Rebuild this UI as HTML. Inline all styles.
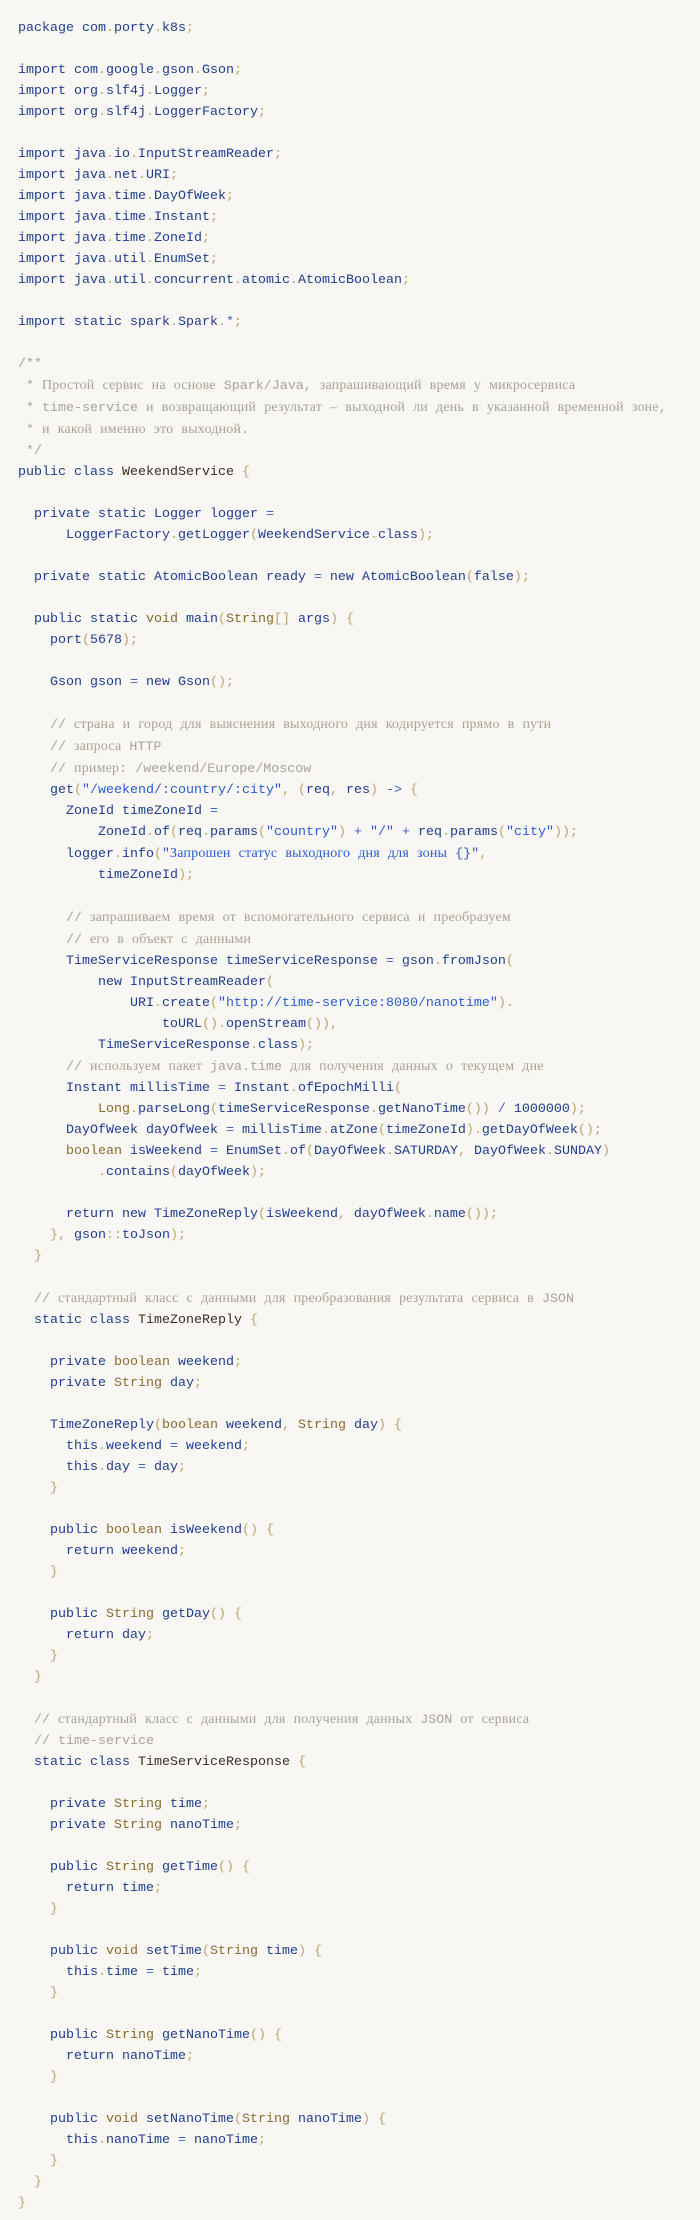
<!DOCTYPE html>
<html><head><meta charset="utf-8"><style>
html,body{margin:0;padding:0;background:#f8f7f4;}
body{width:700px;height:2220px;overflow:hidden;}
pre{margin:0;padding:18px 0 0 18px;font-family:"Liberation Mono",monospace;font-size:13.33px;line-height:21px;color:#1f3d8e;}
.p{color:#bfa26a}.t{color:#8a6a2c}.n{color:#3a2c1e}.s{color:#2b5bd4}.c{color:#aaa393}.o{color:#3e62c4}
.r{font-family:"Liberation Serif",serif;font-size:14px;letter-spacing:0.2px}
</style></head><body><pre>package com<span class="p">.</span>porty<span class="p">.</span>k8s<span class="p">;</span>

import com<span class="p">.</span>google<span class="p">.</span>gson<span class="p">.</span>Gson<span class="p">;</span>
import org<span class="p">.</span>slf4j<span class="p">.</span>Logger<span class="p">;</span>
import org<span class="p">.</span>slf4j<span class="p">.</span>LoggerFactory<span class="p">;</span>

import java<span class="p">.</span>io<span class="p">.</span>InputStreamReader<span class="p">;</span>
import java<span class="p">.</span>net<span class="p">.</span>URI<span class="p">;</span>
import java<span class="p">.</span>time<span class="p">.</span>DayOfWeek<span class="p">;</span>
import java<span class="p">.</span>time<span class="p">.</span>Instant<span class="p">;</span>
import java<span class="p">.</span>time<span class="p">.</span>ZoneId<span class="p">;</span>
import java<span class="p">.</span>util<span class="p">.</span>EnumSet<span class="p">;</span>
import java<span class="p">.</span>util<span class="p">.</span>concurrent<span class="p">.</span>atomic<span class="p">.</span>AtomicBoolean<span class="p">;</span>

import static spark<span class="p">.</span>Spark<span class="p">.</span><span class="o">*</span><span class="p">;</span>

<span class="c">/**
 * <span class="r">Простой</span> <span class="r">сервис</span> <span class="r">на</span> <span class="r">основе</span> Spark/Java, <span class="r">запрашивающий</span> <span class="r">время</span> <span class="r">у</span> <span class="r">микросервиса</span>
 * time-service <span class="r">и</span> <span class="r">возвращающий</span> <span class="r">результат</span> <span class="r">–</span> <span class="r">выходной</span> <span class="r">ли</span> <span class="r">день</span> <span class="r">в</span> <span class="r">указанной</span> <span class="r">временной</span> <span class="r">зоне</span>,
 * <span class="r">и</span> <span class="r">какой</span> <span class="r">именно</span> <span class="r">это</span> <span class="r">выходной</span>.
 */</span>
public class <span class="n">WeekendService</span> <span class="p">{</span>

  private static Logger logger <span class="o">=</span>
      LoggerFactory<span class="p">.</span>getLogger<span class="p">(</span>WeekendService<span class="p">.</span>class<span class="p">);</span>

  private static AtomicBoolean ready <span class="o">=</span> new AtomicBoolean<span class="p">(</span>false<span class="p">);</span>

  public static <span class="t">void</span> main<span class="p">(</span><span class="t">String</span><span class="p">[]</span> args<span class="p">)</span> <span class="p">{</span>
    port<span class="p">(</span>5678<span class="p">);</span>

    Gson gson <span class="o">=</span> new Gson<span class="p">();</span>

    <span class="c">// <span class="r">страна</span> <span class="r">и</span> <span class="r">город</span> <span class="r">для</span> <span class="r">выяснения</span> <span class="r">выходного</span> <span class="r">дня</span> <span class="r">кодируется</span> <span class="r">прямо</span> <span class="r">в</span> <span class="r">пути</span></span>
    <span class="c">// <span class="r">запроса</span> HTTP</span>
    <span class="c">// <span class="r">пример</span>: /weekend/Europe/Moscow</span>
    get<span class="p">(</span><span class="s">"/weekend/:country/:city"</span><span class="p">,</span> <span class="p">(</span>req<span class="p">,</span> res<span class="p">)</span> <span class="o">-&gt;</span> <span class="p">{</span>
      ZoneId timeZoneId <span class="o">=</span>
          ZoneId<span class="p">.</span>of<span class="p">(</span>req<span class="p">.</span>params<span class="p">(</span><span class="s">"country"</span><span class="p">)</span> <span class="o">+</span> <span class="s">"/"</span> <span class="o">+</span> req<span class="p">.</span>params<span class="p">(</span><span class="s">"city"</span><span class="p">));</span>
      logger<span class="p">.</span>info<span class="p">(</span><span class="s">"<span class="r">Запрошен</span> <span class="r">статус</span> <span class="r">выходного</span> <span class="r">дня</span> <span class="r">для</span> <span class="r">зоны</span> {}"</span><span class="p">,</span>
          timeZoneId<span class="p">);</span>

      <span class="c">// <span class="r">запрашиваем</span> <span class="r">время</span> <span class="r">от</span> <span class="r">вспомогательного</span> <span class="r">сервиса</span> <span class="r">и</span> <span class="r">преобразуем</span></span>
      <span class="c">// <span class="r">его</span> <span class="r">в</span> <span class="r">объект</span> <span class="r">с</span> <span class="r">данными</span></span>
      TimeServiceResponse timeServiceResponse <span class="o">=</span> gson<span class="p">.</span>fromJson<span class="p">(</span>
          new InputStreamReader<span class="p">(</span>
              URI<span class="p">.</span>create<span class="p">(</span><span class="s">"http://time-service:8080/nanotime"</span><span class="p">).</span>
                  toURL<span class="p">().</span>openStream<span class="p">()),</span>
          TimeServiceResponse<span class="p">.</span>class<span class="p">);</span>
      <span class="c">// <span class="r">используем</span> <span class="r">пакет</span> java.time <span class="r">для</span> <span class="r">получения</span> <span class="r">данных</span> <span class="r">о</span> <span class="r">текущем</span> <span class="r">дне</span></span>
      Instant millisTime <span class="o">=</span> Instant<span class="p">.</span>ofEpochMilli<span class="p">(</span>
          <span class="t">Long</span><span class="p">.</span>parseLong<span class="p">(</span>timeServiceResponse<span class="p">.</span>getNanoTime<span class="p">())</span> <span class="o">/</span> 1000000<span class="p">);</span>
      DayOfWeek dayOfWeek <span class="o">=</span> millisTime<span class="p">.</span>atZone<span class="p">(</span>timeZoneId<span class="p">).</span>getDayOfWeek<span class="p">();</span>
      <span class="t">boolean</span> isWeekend <span class="o">=</span> EnumSet<span class="p">.</span>of<span class="p">(</span>DayOfWeek<span class="p">.</span>SATURDAY<span class="p">,</span> DayOfWeek<span class="p">.</span>SUNDAY<span class="p">)</span>
          <span class="p">.</span>contains<span class="p">(</span>dayOfWeek<span class="p">);</span>

      return new TimeZoneReply<span class="p">(</span>isWeekend<span class="p">,</span> dayOfWeek<span class="p">.</span>name<span class="p">());</span>
    <span class="p">},</span> gson<span class="p">::</span>toJson<span class="p">);</span>
  <span class="p">}</span>

  <span class="c">// <span class="r">стандартный</span> <span class="r">класс</span> <span class="r">с</span> <span class="r">данными</span> <span class="r">для</span> <span class="r">преобразования</span> <span class="r">результата</span> <span class="r">сервиса</span> <span class="r">в</span> JSON</span>
  static class <span class="n">TimeZoneReply</span> <span class="p">{</span>

    private <span class="t">boolean</span> weekend<span class="p">;</span>
    private <span class="t">String</span> day<span class="p">;</span>

    TimeZoneReply<span class="p">(</span><span class="t">boolean</span> weekend<span class="p">,</span> <span class="t">String</span> day<span class="p">)</span> <span class="p">{</span>
      this<span class="p">.</span>weekend <span class="o">=</span> weekend<span class="p">;</span>
      this<span class="p">.</span>day <span class="o">=</span> day<span class="p">;</span>
    <span class="p">}</span>

    public <span class="t">boolean</span> isWeekend<span class="p">()</span> <span class="p">{</span>
      return weekend<span class="p">;</span>
    <span class="p">}</span>

    public <span class="t">String</span> getDay<span class="p">()</span> <span class="p">{</span>
      return day<span class="p">;</span>
    <span class="p">}</span>
  <span class="p">}</span>

  <span class="c">// <span class="r">стандартный</span> <span class="r">класс</span> <span class="r">с</span> <span class="r">данными</span> <span class="r">для</span> <span class="r">получения</span> <span class="r">данных</span> JSON <span class="r">от</span> <span class="r">сервиса</span></span>
  <span class="c">// time-service</span>
  static class <span class="n">TimeServiceResponse</span> <span class="p">{</span>

    private <span class="t">String</span> time<span class="p">;</span>
    private <span class="t">String</span> nanoTime<span class="p">;</span>

    public <span class="t">String</span> getTime<span class="p">()</span> <span class="p">{</span>
      return time<span class="p">;</span>
    <span class="p">}</span>

    public <span class="t">void</span> setTime<span class="p">(</span><span class="t">String</span> time<span class="p">)</span> <span class="p">{</span>
      this<span class="p">.</span>time <span class="o">=</span> time<span class="p">;</span>
    <span class="p">}</span>

    public <span class="t">String</span> getNanoTime<span class="p">()</span> <span class="p">{</span>
      return nanoTime<span class="p">;</span>
    <span class="p">}</span>

    public <span class="t">void</span> setNanoTime<span class="p">(</span><span class="t">String</span> nanoTime<span class="p">)</span> <span class="p">{</span>
      this<span class="p">.</span>nanoTime <span class="o">=</span> nanoTime<span class="p">;</span>
    <span class="p">}</span>
  <span class="p">}</span>
<span class="p">}</span></pre></body></html>
